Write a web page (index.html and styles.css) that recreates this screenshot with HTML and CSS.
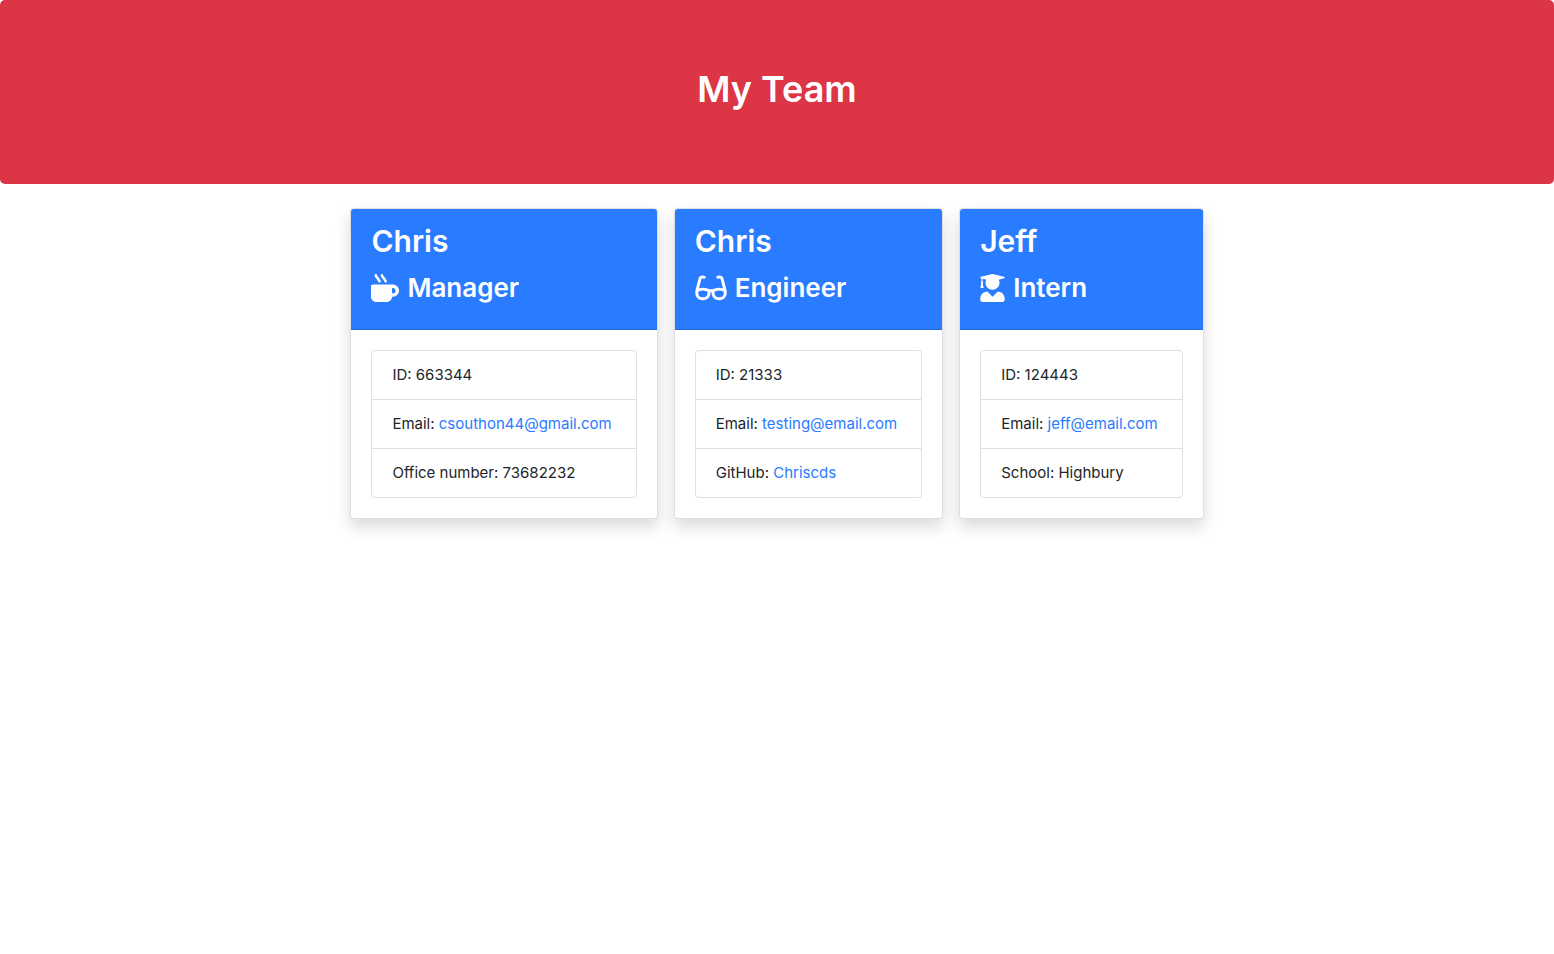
FILE: index.html
```html
<!DOCTYPE html>
<html lang="en">
<head>
<meta charset="utf-8">
<meta name="viewport" content="width=device-width, initial-scale=1">
<title>My Team</title>
<link rel="stylesheet" href="styles.css">
</head>
<body>
<header class="banner"><h1 class="banner-title">My Team</h1></header>
<main class="team">
  <article class="card">
    <div class="card-header">
      <h2 class="name">Chris</h2>
      <h3 class="role"><svg class="icon" width="28" height="28" viewBox="0 0 512 512" aria-hidden="true"><path fill="currentColor" fill-rule="evenodd" d="M32 192H400a112 112 0 0 1 0 224H384C384 469 341 512 288 512H96C43 512 0 469 0 416V224C0 206 14 192 32 192zM384 256v96h16a48 48 0 0 0 0-96z"/><path fill="none" stroke="currentColor" stroke-width="46" stroke-linecap="round" d="M88 24C94 66 142 84 156 134M200 24C206 66 254 84 268 134"/></svg>Manager</h3>
    </div>
    <div class="card-body">
      <ul class="details">
        <li class="detail">ID: 663344</li>
        <li class="detail">Email: <a class="link" href="mailto:csouthon44@gmail.com">csouthon44@gmail.com</a></li>
        <li class="detail">Office number: 73682232</li>
      </ul>
    </div>
  </article>
  <article class="card">
    <div class="card-header">
      <h2 class="name">Chris</h2>
      <h3 class="role"><svg class="icon" width="32" height="28" viewBox="0 0 576 512" aria-hidden="true"><path fill="none" stroke="currentColor" stroke-width="54" stroke-linecap="round" stroke-linejoin="round" d="M164 60C158 56 144 54 130 56Q92 58 82 100L32 300M412 60C418 56 432 54 446 56Q484 58 494 100L544 300M28 304C90 268 186 268 252 304V350C250 408 206 452 144 452H136C72 452 28 408 28 350zM548 304C486 268 390 268 324 304V350C326 408 370 452 432 452H440C504 452 548 408 548 350zM252 304H324"/></svg>Engineer</h3>
    </div>
    <div class="card-body">
      <ul class="details">
        <li class="detail">ID: 21333</li>
        <li class="detail">Email: <a class="link" href="mailto:testing@email.com">testing@email.com</a></li>
        <li class="detail">GitHub: <a class="link" href="https://github.com/Chriscds">Chriscds</a></li>
      </ul>
    </div>
  </article>
  <article class="card">
    <div class="card-header">
      <h2 class="name">Jeff</h2>
      <h3 class="role"><svg class="icon" width="25" height="28" viewBox="0 0 448 512" aria-hidden="true"><path fill="currentColor" d="M319.400 320.600L224 416l-95.400-95.400C57.100 323.700 0 382.200 0 454.400v9.600c0 26.500 21.500 48 48 48h352c26.500 0 48-21.500 48-48v-9.600c0-72.200-57.100-130.700-128.600-133.800zM13.600 79.800l6.400 1.500v58.400c-7 4.200-12 11.500-12 20.300 0 8.400 4.600 15.400 11.100 19.700L3.500 242c-1.700 6.900 2.100 14 7.600 14h41.800c5.500 0 9.300-7.100 7.600-14l-15.600-62.300C51.400 175.400 56 168.400 56 160c0-8.800-5-16.100-12-20.300V87.100l66 15.900c-8.600 17.200-14 36.400-14 57 0 70.700 57.300 128 128 128s128-57.300 128-128c0-20.600-5.300-39.800-14-57l96.300-23.200c18.200-4.400 18.200-27.100 0-31.500l-190.400-46c-13-3.100-26.700-3.100-39.700 0L13.600 48.200c-18.100 4.400-18.100 27.200 0 31.600z"/></svg>Intern</h3>
    </div>
    <div class="card-body">
      <ul class="details">
        <li class="detail">ID: 124443</li>
        <li class="detail">Email: <a class="link" href="mailto:jeff@email.com">jeff@email.com</a></li>
        <li class="detail">School: Highbury</li>
      </ul>
    </div>
  </article>
</main>
</body>
</html>
```
FILE: styles.css
```css
* { box-sizing: border-box; }
body {
  min-height: 100vh;
  margin: 0;
  background: #fff;
  color: #212529;
  font-family: Inter, "Liberation Sans", sans-serif;
  font-size: 15px;
  line-height: 24px;
}
.banner {
  padding: 64px 32px;
  margin-bottom: 24px;
  border-radius: 5px;
  background: #dc3545;
  color: #fff;
  text-align: center;
}
.banner-title {
  margin: 0 0 6px;
  font-size: 36px;
  line-height: 50px;
  font-weight: 600;
}
.team {
  display: flex;
  flex-wrap: wrap;
  justify-content: center;
  gap: 16px;
  padding-bottom: 32px;
}
.card {
  border: 1px solid rgba(0, 0, 0, .125);
  border-radius: 4px;
  background: #fff;
  box-shadow: 0 8px 16px rgba(0, 0, 0, .15);
}
.card-header {
  padding: 12px 20px;
  border-bottom: 1px solid rgba(0, 0, 0, .125);
  border-radius: 3px 3px 0 0;
  background: #297bff;
  color: #fff;
}
.name {
  margin: 0 0 8px;
  font-size: 30px;
  line-height: 40px;
  font-weight: 600;
}
.role {
  display: flex;
  align-items: center;
  gap: 8px;
  margin: 0 0 10px;
  font-size: 26px;
  line-height: 38px;
  font-weight: 600;
}
.card-body { padding: 20px; }
.details {
  margin: 0;
  padding: 0;
  list-style: none;
  border: 1px solid rgba(0, 0, 0, .125);
  border-radius: 4px;
}
.detail { padding: 12px 24px 12px 20px; }
.detail + .detail { border-top: 1px solid rgba(0, 0, 0, .125); }
.link { color: #297bff; text-decoration: none; }
```
